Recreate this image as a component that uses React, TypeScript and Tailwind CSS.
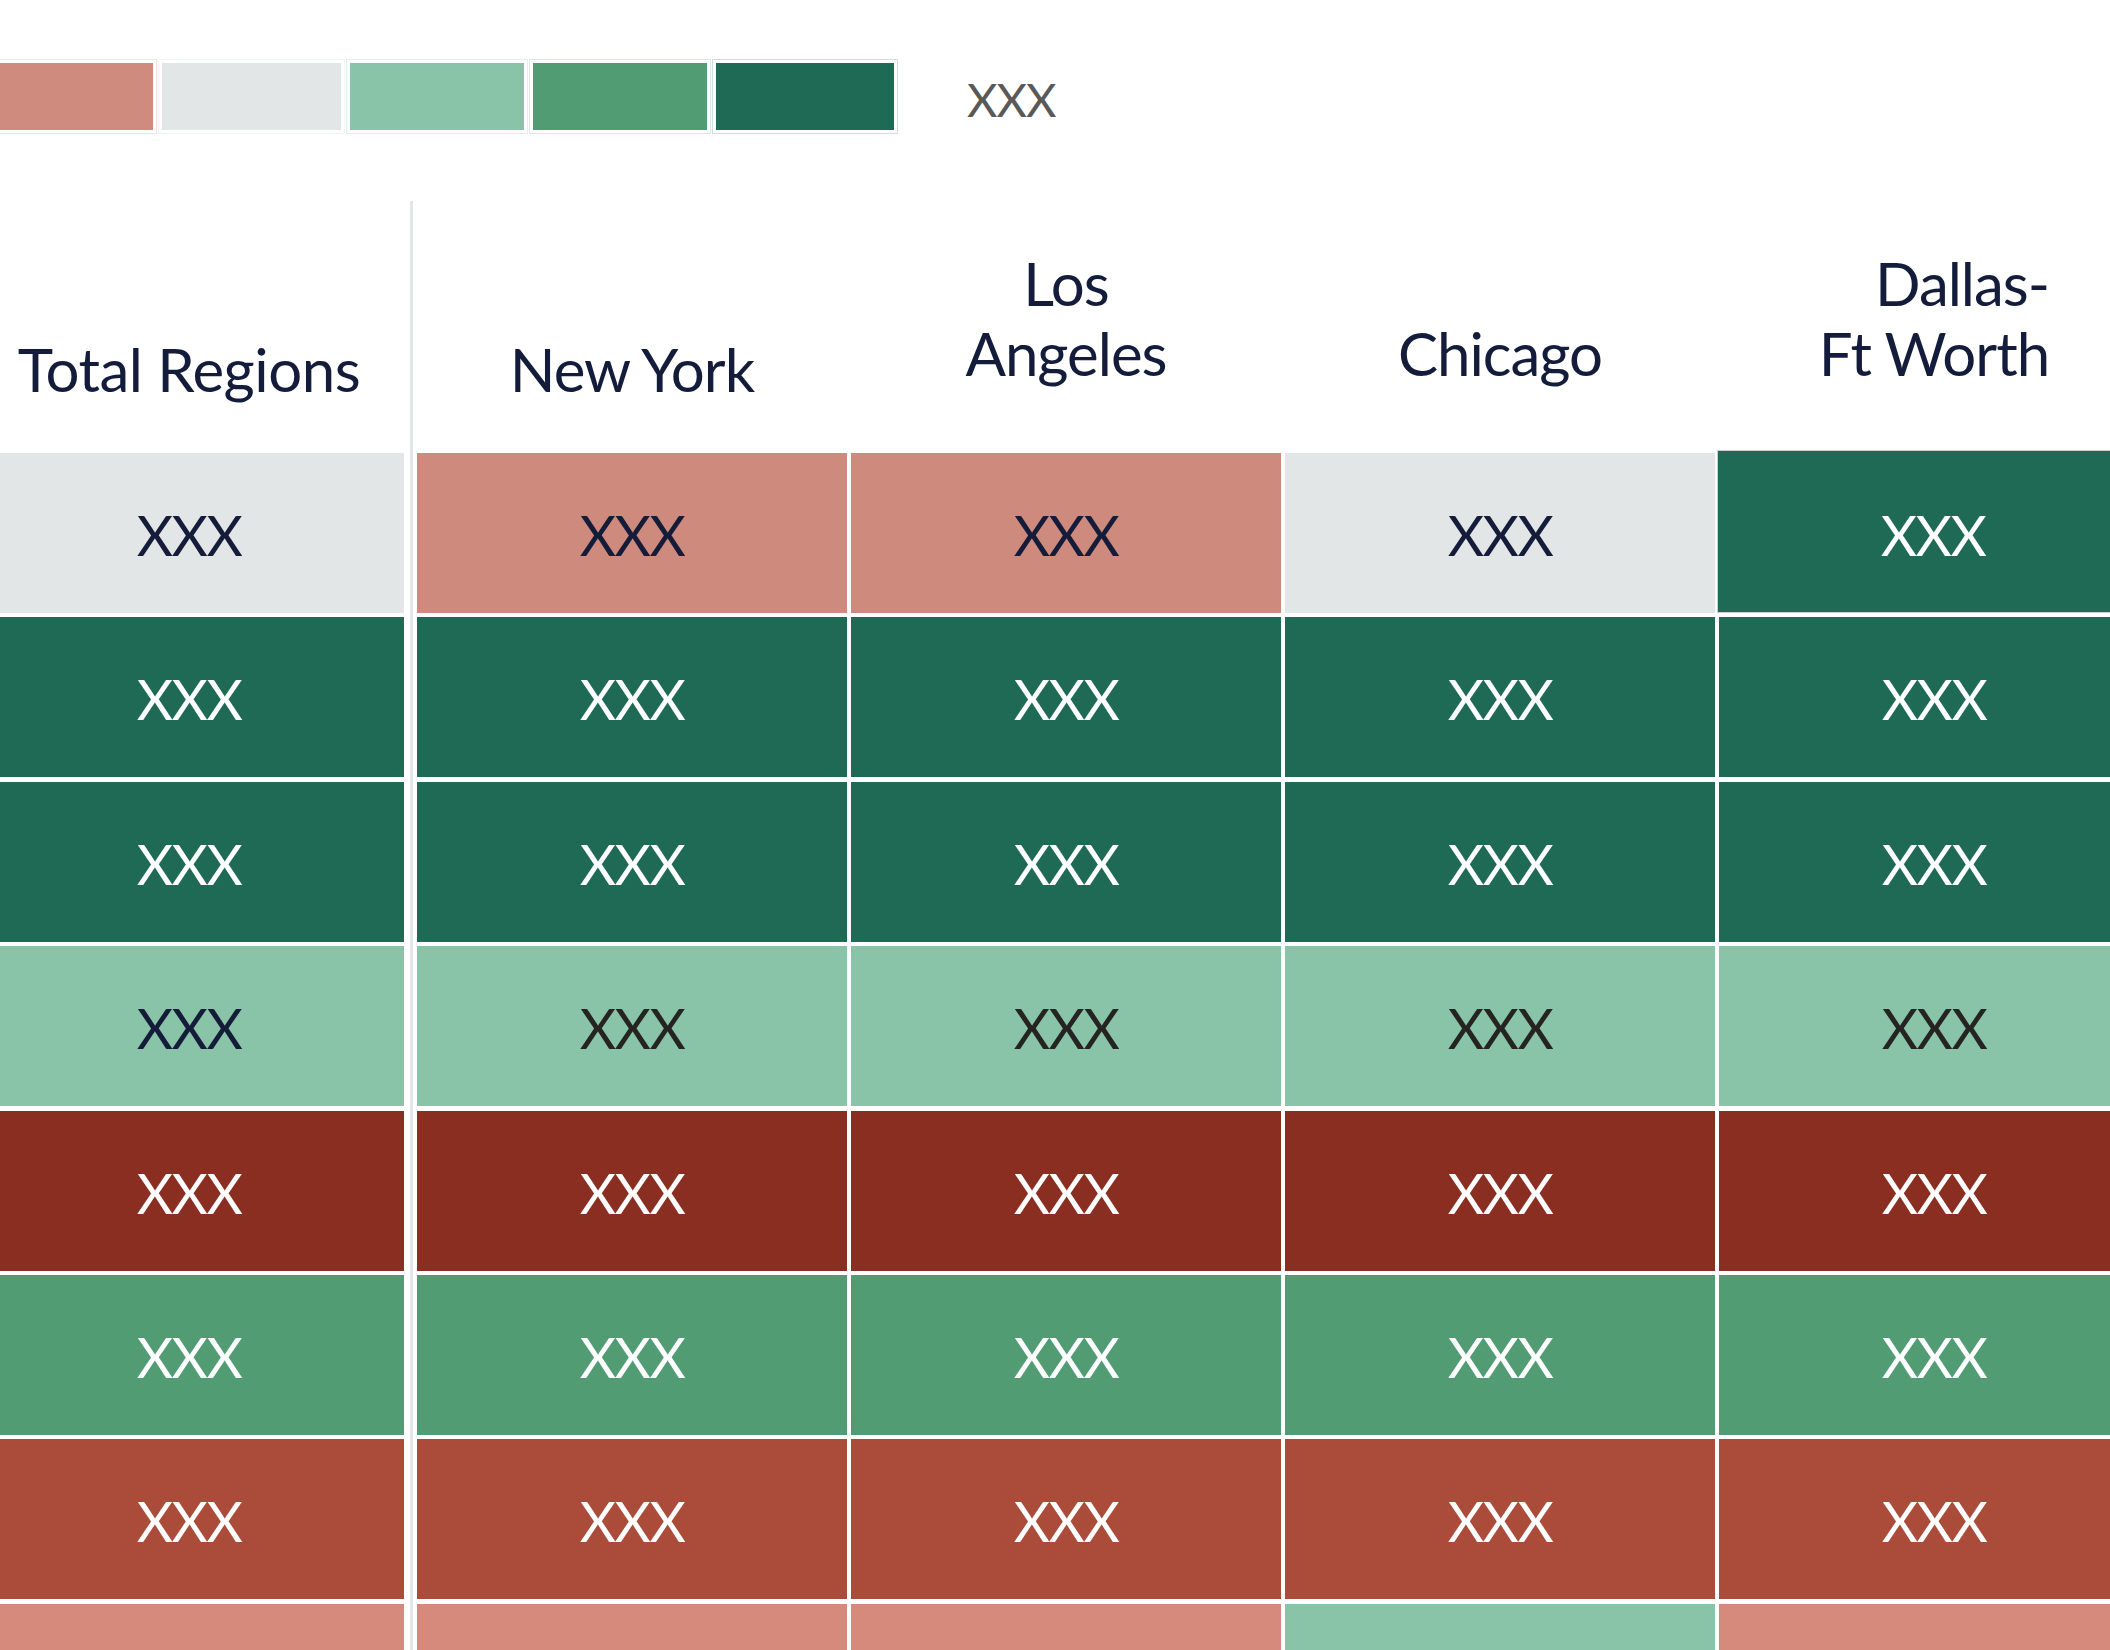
import React from 'react';

type Tone = 'grey' | 'salmon' | 'dark' | 'light' | 'lightNavy' | 'mid' | 'maroon' | 'red' | 'pink';

const tones: Record<Tone, string> = {
  grey: 'bg-[#e2e6e7] text-[#141c3a]',
  salmon: 'bg-[#ce8b7d] text-[#141c3a]',
  dark: 'bg-[#1f6a55] text-white',
  light: 'bg-[#89c4a9] text-[#252423]',
  lightNavy: 'bg-[#89c4a9] text-[#141c3a]',
  mid: 'bg-[#529c74] text-white',
  maroon: 'bg-[#8b2e22] text-white',
  red: 'bg-[#ab4c3a] text-white',
  pink: 'bg-[#d68a7c] text-[#141c3a]',
};

// first entry is the Total Regions column, then New York, LA, Chicago, Dallas
const rows: Tone[][] = [
  ['grey', 'salmon', 'salmon', 'grey', 'dark'],
  ['dark', 'dark', 'dark', 'dark', 'dark'],
  ['dark', 'dark', 'dark', 'dark', 'dark'],
  ['lightNavy', 'light', 'light', 'light', 'light'],
  ['maroon', 'maroon', 'maroon', 'maroon', 'maroon'],
  ['mid', 'mid', 'mid', 'mid', 'mid'],
  ['red', 'red', 'red', 'red', 'red'],
  ['pink', 'pink', 'pink', 'light', 'pink'],
];

const swatches = [
  { color: 'bg-[#cf8b7e]', width: 'w-[178px]', ring: 'outline-[#f6e3e0]' },
  { color: 'bg-[#e2e6e7]', width: 'w-[179px]', ring: 'outline-[#f3f5f5]' },
  { color: 'bg-[#89c4a9]', width: 'w-[174px]', ring: 'outline-[#e3efea]' },
  { color: 'bg-[#529c74]', width: 'w-[174px]', ring: 'outline-[#dcebe4]' },
  { color: 'bg-[#1f6a55]', width: 'w-[178px]', ring: 'outline-[#cfe0da]' },
];

// last row sits below the fold, its values are never visible
const Cell: React.FC<{ tone: Tone; highlight?: boolean; hidden?: boolean }> = ({ tone, highlight, hidden }) => (
  <div
    className={`flex items-center justify-center text-[56px] leading-none tracking-[-1.5px] ${tones[tone]} ${
      highlight ? '-mt-[3px] -ml-[2px] h-[163px] pt-[7px] border border-[#c9d2cf]' : 'h-[160px] pt-[4px]'
    }`}
  >
    {hidden ? null : 'XXX'}
  </div>
);

export default function App() {
  return (
    <div className="w-[2110px] h-[1650px] overflow-hidden bg-white font-['Lato',sans-serif]">
      {/* legend */}
      <div className="pt-[63px] -ml-[25px] flex items-center">
        <div className="flex gap-[9px]">
          {swatches.map((s, i) => (
            <div key={i} className={`h-[67px] ${s.width} ${s.color} outline outline-offset-[3px] ${s.ring}`} />
          ))}
        </div>
        <span className="ml-[73px] pt-[6px] text-[47px] leading-none tracking-[-1px] text-[#595959]">XXX</span>
      </div>

      {/* matrix */}
      <div className="mt-[71px] -ml-[26px] flex items-stretch">
        <div className="w-[430px] shrink-0">
          <div className="h-[252px] flex items-end justify-center pb-[49px] text-[60px] leading-[70px] tracking-[-0.5px] text-[#131c3b]">
            Total Regions
          </div>
          <div className="flex flex-col gap-[4.4px]">
            {rows.map((r, i) => (
              <Cell key={i} tone={r[0]} hidden={i === rows.length - 1} />
            ))}
          </div>
        </div>

        <div className="ml-[6px] mr-[4px] w-[3px] shrink-0 bg-[#e3e6e8]" />

        <div className="shrink-0">
          <div className="h-[252px] grid grid-cols-[430px_430px_430px_430px] gap-x-[4px] items-end text-[60px] leading-[70px] tracking-[-1px] text-[#131c3b] text-center">
            <div className="pb-[49px]">New York</div>
            <div className="pb-[65px]">
              Los
              <br />
              Angeles
            </div>
            <div className="pb-[65px]">Chicago</div>
            <div className="pb-[65px]">
              <span className="inline-block text-right">
                Dallas-
                <br />
                Ft Worth
              </span>
            </div>
          </div>
          <div className="grid grid-cols-[430px_430px_430px_430px] gap-x-[4px] gap-y-[4.4px] items-start">
            {rows.map((r, i) =>
              r.slice(1).map((t, j) => (
                <Cell
                  key={`${i}-${j}`}
                  tone={t}
                  highlight={i === 0 && j === 3}
                  hidden={i === rows.length - 1}
                />
              ))
            )}
          </div>
        </div>
      </div>
    </div>
  );
}
